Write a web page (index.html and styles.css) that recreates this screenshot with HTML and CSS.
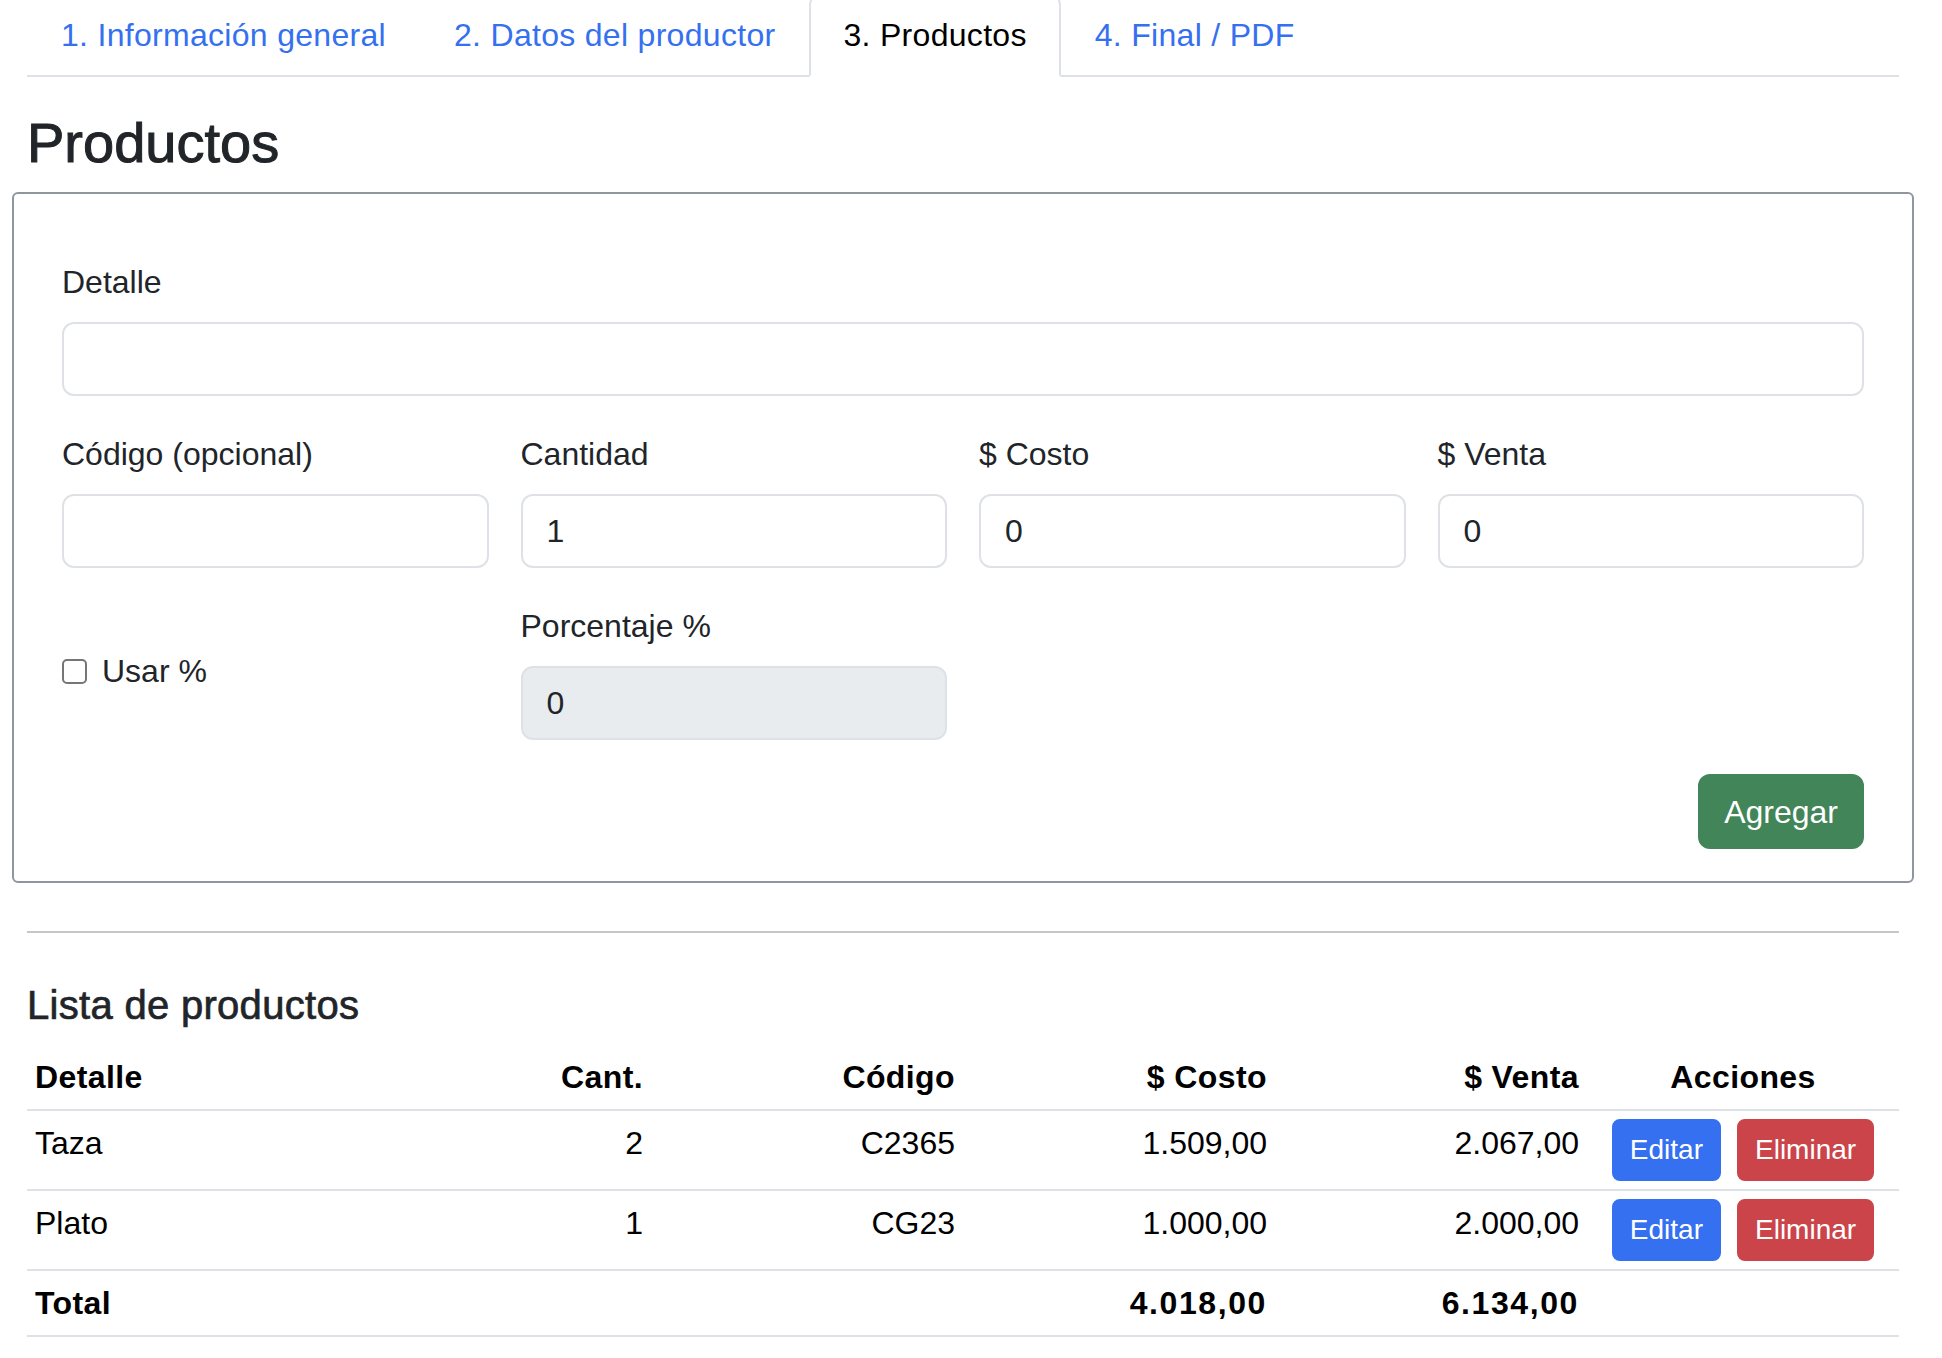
FILE: index.html
```html
<!DOCTYPE html>
<html lang="es">
<head>
<meta charset="utf-8">
<title>Productos</title>
<link rel="stylesheet" href="styles.css">
</head>
<body>
<div class="page">
  <ul class="tabs">
    <li><a class="tab-link" href="#">1. Información general</a></li>
    <li><a class="tab-link" href="#">2. Datos del productor</a></li>
    <li><a class="tab-link active" href="#">3. Productos</a></li>
    <li><a class="tab-link" href="#">4. Final / PDF</a></li>
  </ul>

  <h3 class="title">Productos</h3>

  <form class="card">
    <div class="field">
      <label class="label">Detalle</label>
      <input class="input" type="text" value="">
    </div>
    <div class="row4">
      <div class="field">
        <label class="label">Código (opcional)</label>
        <input class="input" type="text" value="">
      </div>
      <div class="field">
        <label class="label">Cantidad</label>
        <input class="input" type="text" value="1">
      </div>
      <div class="field">
        <label class="label">$ Costo</label>
        <input class="input" type="text" value="0">
      </div>
      <div class="field">
        <label class="label">$ Venta</label>
        <input class="input" type="text" value="0">
      </div>
    </div>
    <div class="row4">
      <label class="check"><input class="check-box" type="checkbox"><span>Usar %</span></label>
      <div class="field">
        <label class="label">Porcentaje %</label>
        <input class="input" type="text" value="0" disabled>
      </div>
    </div>
    <div class="actions">
      <button type="button" class="btn btn-success">Agregar</button>
    </div>
  </form>

  <hr class="divider">

  <h5 class="subtitle">Lista de productos</h5>

  <table class="table">
    <thead>
      <tr>
        <th class="left">Detalle</th>
        <th class="right">Cant.</th>
        <th class="right">Código</th>
        <th class="right">$ Costo</th>
        <th class="right">$ Venta</th>
        <th class="center">Acciones</th>
      </tr>
    </thead>
    <tbody>
      <tr>
        <td>Taza</td>
        <td class="right">2</td>
        <td class="right">C2365</td>
        <td class="right">1.509,00</td>
        <td class="right">2.067,00</td>
        <td><div class="acts"><button type="button" class="btn-sm btn-primary">Editar</button><button type="button" class="btn-sm btn-danger">Eliminar</button></div></td>
      </tr>
      <tr>
        <td>Plato</td>
        <td class="right">1</td>
        <td class="right">CG23</td>
        <td class="right">1.000,00</td>
        <td class="right">2.000,00</td>
        <td><div class="acts"><button type="button" class="btn-sm btn-primary">Editar</button><button type="button" class="btn-sm btn-danger">Eliminar</button></div></td>
      </tr>
      <tr class="total">
        <th class="left">Total</th>
        <td></td>
        <td></td>
        <th class="right num">4.018,00</th>
        <th class="right num">6.134,00</th>
        <td></td>
      </tr>
    </tbody>
  </table>
</div>
</body>
</html>
```

FILE: styles.css
```css
* { box-sizing: border-box; }

html, body {
  margin: 0;
  padding: 0;
  background: #fff;
}

body {
  font-family: "Liberation Sans", Arial, sans-serif;
  font-size: 32px;
  line-height: 48px;
  color: #212529;
}

.page {
  width: 1872px;
  margin: -7px 0 0 27px;
}

/* Tabs */
.tabs {
  display: flex;
  list-style: none;
  margin: 0;
  padding: 0;
  border-bottom: 2px solid #dee2e6;
}

.tab-link {
  display: block;
  padding: 16px 32px;
  margin-bottom: -2px;
  border: 2px solid transparent;
  border-radius: 12px 12px 0 0;
  color: #3470f0;
  text-decoration: none;
  letter-spacing: 0.3px;
}

.tab-link.active {
  color: #000;
  background: #fff;
  border-color: #dee2e6 #dee2e6 #fff;
}

/* Headings */
.title {
  margin: 32px 0 16px;
  font-size: 56px;
  line-height: 67.2px;
  font-weight: 400;
  -webkit-text-stroke: 1px #212529;
}

.subtitle {
  margin: 0 0 16px;
  font-size: 40px;
  line-height: 48px;
  font-weight: 400;
  letter-spacing: 0.3px;
  -webkit-text-stroke: 0.7px #212529;
}

/* Card form */
.card {
  margin: 0 -15px 48px;
  border: 2px solid #8f96a0;
  border-radius: 6px;
  padding: 64px 48px 32px;
  display: flex;
  flex-direction: column;
  gap: 34px;
}

.row4 {
  display: grid;
  grid-template-columns: repeat(4, 1fr);
  column-gap: 32px;
}

.field {
  display: flex;
  flex-direction: column;
}

.label {
  display: block;
  margin-bottom: 16px;
}

.input {
  display: block;
  width: 100%;
  height: 74px;
  margin: 0;
  padding: 0 24px;
  border: 2px solid #dee2e6;
  border-radius: 12px;
  background: #fff;
  font-family: inherit;
  font-size: 32px;
  color: #212529;
  outline: none;
}

.input:disabled {
  background: #e9ecef;
  color: #212529;
  -webkit-text-fill-color: #212529;
  opacity: 1;
}

.check {
  display: flex;
  align-items: center;
  gap: 15px;
  align-self: center;
}

.check-box {
  appearance: none;
  -webkit-appearance: none;
  width: 25px;
  height: 25px;
  margin: 0;
  border: 2px solid #767676;
  border-radius: 5px;
  background: #fff;
}

.actions {
  display: flex;
  justify-content: flex-end;
}

.btn {
  height: 75px;
  padding: 0 24px;
  border: 2px solid transparent;
  border-radius: 12px;
  font-family: inherit;
  font-size: 32px;
  line-height: 48px;
  color: #fff;
  cursor: pointer;
}

.btn-success {
  background: #418558;
  border-color: #418558;
}

/* Divider */
.divider {
  margin: 0 0 48px;
  border: 0;
  border-top: 2px solid #c6c7c8;
  height: 0;
}

/* Table */
.table {
  width: 100%;
  table-layout: fixed;
  border-collapse: collapse;
  color: #000;
}

.table th,
.table td {
  padding: 8px;
  border-bottom: 2px solid #dee2e6;
  vertical-align: top;
  font-size: 32px;
  line-height: 48px;
}

.table th {
  font-weight: 700;
  letter-spacing: 0.4px;
}

.table th.num {
  letter-spacing: 1.6px;
}

.left { text-align: left; }
.right { text-align: right; }
.center { text-align: center; }

.acts {
  display: flex;
  justify-content: center;
  gap: 16px;
}

.btn-sm {
  height: 62px;
  padding: 0 16px;
  border: 2px solid transparent;
  border-radius: 8px;
  font-family: inherit;
  font-size: 28px;
  line-height: 42px;
  color: #fff;
  cursor: pointer;
}

.btn-primary {
  background: #3470f0;
  border-color: #3470f0;
}

.btn-danger {
  background: #cb444a;
  border-color: #cb444a;
}
```
